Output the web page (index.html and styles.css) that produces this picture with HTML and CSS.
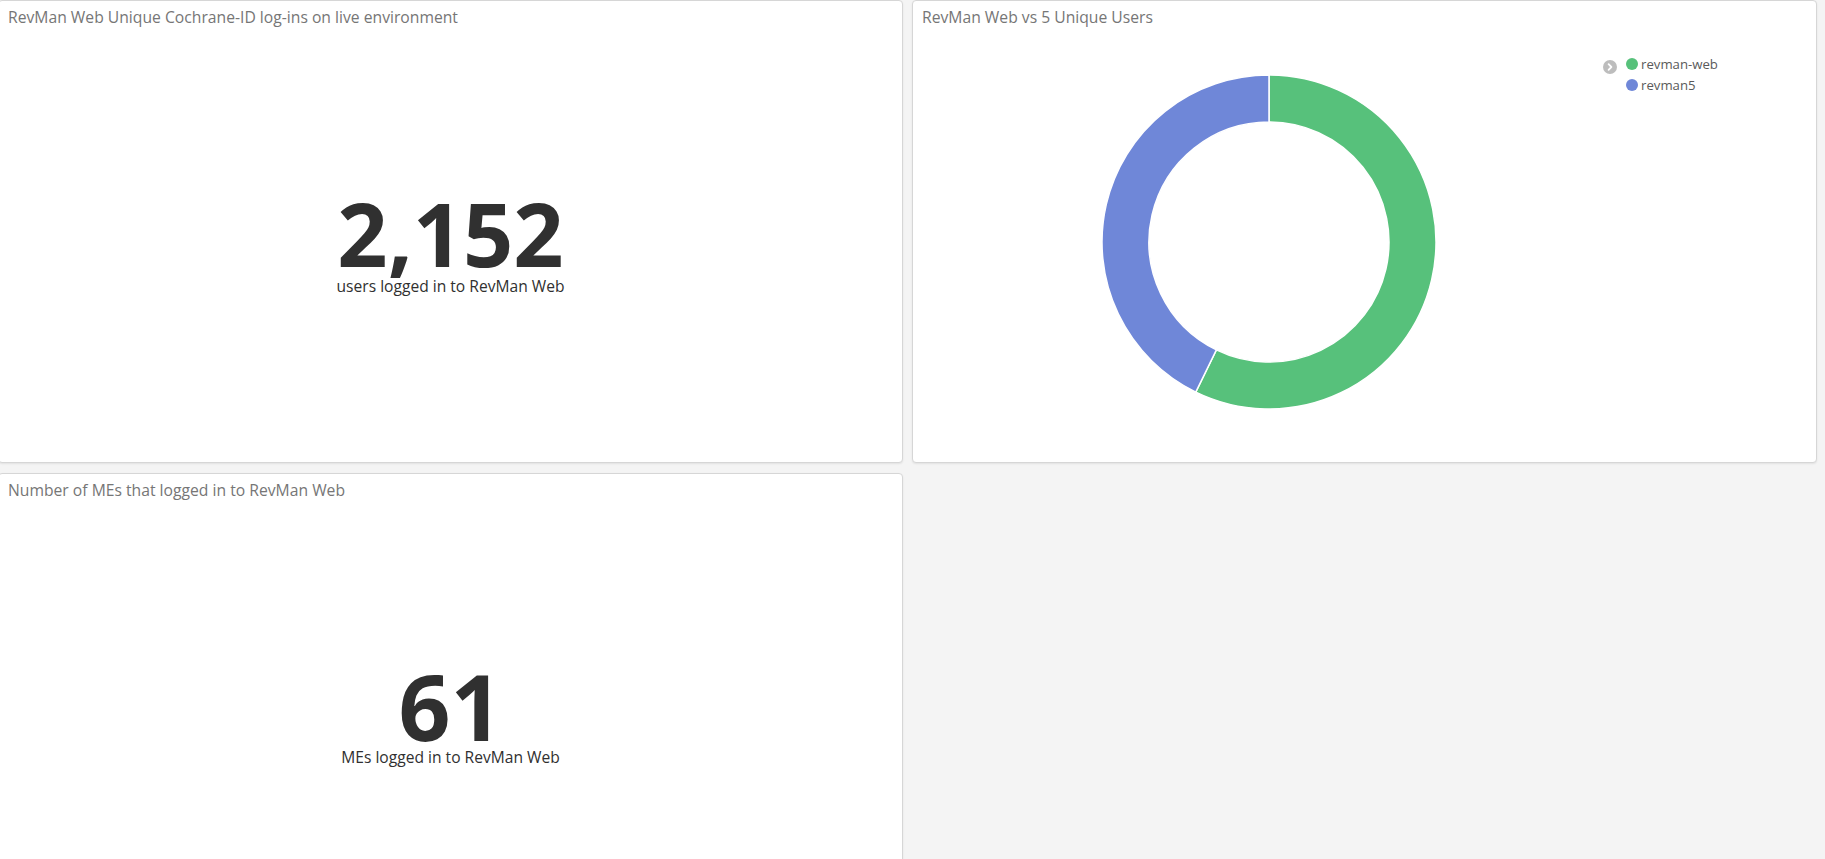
FILE: index.html
```html
<!DOCTYPE html>
<html lang="en">
<head>
<meta charset="utf-8">
<title>Dashboard</title>
<link rel="stylesheet" href="styles.css">
</head>
<body>
<div class="grid">
  <section class="panel">
    <h2 class="panel-title">RevMan Web Unique Cochrane-ID log-ins on live environment</h2>
    <div class="panel-body metric">
      <div class="metric-value">2,152</div>
      <div class="metric-label">users logged in to RevMan Web</div>
    </div>
  </section>
  <section class="panel">
    <h2 class="panel-title">RevMan Web vs 5 Unique Users</h2>
    <div class="panel-body chart-body">
      <div class="chart">
        <svg class="donut" width="340" height="340" viewBox="0 0 340 340">
          <path fill="#57c17b" stroke="#ffffff" stroke-width="1.5" d="M170,3 A167,167 0 1 1 96.79,320.10 L117.39,277.86 A120,120 0 1 0 170,50 Z"/>
          <path fill="#6f87d8" stroke="#ffffff" stroke-width="1.5" d="M96.79,320.10 A167,167 0 0 1 170,3 L170,50 A120,120 0 0 0 117.39,277.86 Z"/>
        </svg>
      </div>
      <div class="legend">
        <span class="legend-toggle">
          <svg width="14" height="14" viewBox="0 0 14 14"><circle cx="7" cy="7" r="7" fill="#bdbdbd"/><path d="M5.6 4.2 L8.4 7 L5.6 9.8" fill="none" stroke="#ffffff" stroke-width="1.8" stroke-linecap="round" stroke-linejoin="round"/></svg>
        </span>
        <ul class="legend-list">
          <li class="legend-item"><span class="dot dot-green"></span>revman-web</li>
          <li class="legend-item"><span class="dot dot-blue"></span>revman5</li>
        </ul>
      </div>
    </div>
  </section>
  <section class="panel">
    <h2 class="panel-title">Number of MEs that logged in to RevMan Web</h2>
    <div class="panel-body metric">
      <div class="metric-value metric-value-large">61</div>
      <div class="metric-label">MEs logged in to RevMan Web</div>
    </div>
  </section>
</div>
</body>
</html>
```
FILE: styles.css
```css
html, body {
  height: 100%;
}
body {
  margin: 0;
  background: #f4f4f4;
  font-family: "Open Sans", "Noto Sans", sans-serif;
  overflow: hidden;
}
.grid {
  display: grid;
  grid-template-columns: 1fr 1fr;
  grid-template-rows: 463px 463px;
  column-gap: 9px;
  row-gap: 10px;
  margin: 0 8px 0 -2px;
}
.panel {
  background: #ffffff;
  border: 1px solid #d6d6d6;
  border-radius: 4px;
  box-shadow: 0 1px 2px rgba(0, 0, 0, 0.08);
  display: flex;
  flex-direction: column;
  min-height: 0;
}
.panel-title {
  margin: 0;
  padding: 4px 9px 0 9px;
  height: 24px;
  line-height: 24px;
  font-size: 15.7px;
  font-weight: 400;
  color: #767676;
  white-space: nowrap;
}
.panel-body {
  flex: 1;
  min-height: 0;
}
.metric {
  display: flex;
  flex-direction: column;
  align-items: center;
  justify-content: center;
  padding-bottom: 3px;
  color: #303030;
}
.metric-value {
  font-size: 88px;
  font-weight: 700;
  line-height: 84px;
}
.metric-value-large {
  font-size: 91px;
  line-height: 79px;
}
.metric-label {
  font-size: 15.6px;
  line-height: 22px;
}
.chart-body {
  display: flex;
}
.chart {
  flex: 1;
  display: flex;
  align-items: center;
  justify-content: center;
  padding-left: 25px;
  padding-bottom: 7px;
}
.donut {
  display: block;
}
.legend {
  width: 216px;
  padding: 24px 0 0 3px;
  box-sizing: border-box;
  display: flex;
  align-items: flex-start;
  gap: 9px;
}
.legend-toggle {
  display: block;
  width: 14px;
  height: 14px;
  margin-top: 7px;
}
.legend-toggle svg {
  display: block;
}
.legend-list {
  list-style: none;
  margin: 0;
  padding: 0;
}
.legend-item {
  display: flex;
  align-items: center;
  gap: 3px;
  height: 21px;
  font-size: 13.2px;
  color: #5a5a5a;
}
.dot {
  width: 12px;
  height: 12px;
  border-radius: 50%;
}
.dot-green {
  background: #57c17b;
}
.dot-blue {
  background: #6f87d8;
}
```
